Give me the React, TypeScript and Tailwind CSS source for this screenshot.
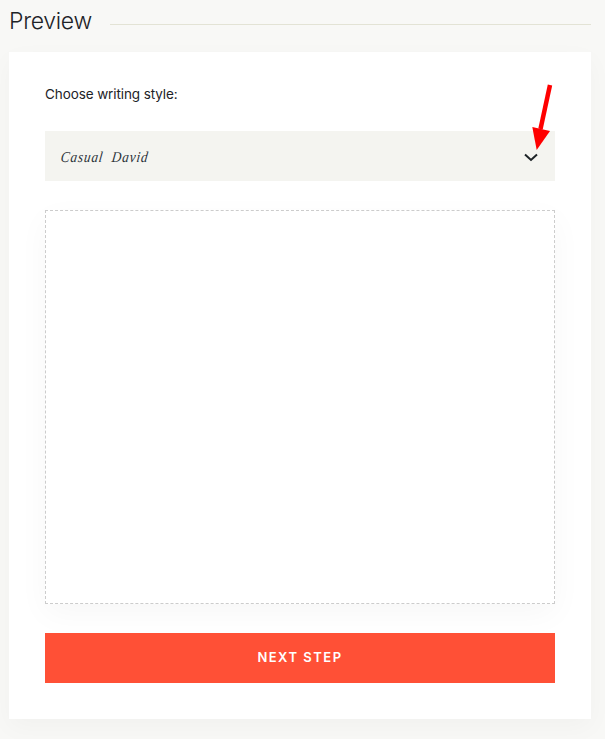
export default function App() {
  return (
    <div className="relative min-h-[739px] overflow-hidden bg-[#f8f8f6] px-[9px] pr-[14px] font-['Inter',sans-serif]">
      {/* Heading */}
      <div className="flex h-[52px] items-center gap-[18px] pb-[10px]">
        <h2 className="text-[23px] leading-none font-light tracking-[-0.3px] text-[#1d2327]">Preview</h2>
        <div className="mt-[6px] h-px flex-1 bg-[#e3e3d5]" />
      </div>

      {/* Card */}
      <div className="flex h-[667px] flex-col bg-white px-[36px] pt-[33px] shadow-[0_8px_24px_rgba(0,0,0,0.03)]">
        <label className="h-[18px] text-[13.5px] leading-[18px] tracking-[-0.1px] text-[#1d2327]">Choose writing style:</label>

        <div className="mt-[28px] flex h-[50px] items-center justify-between bg-[#f4f4f0] pr-[17px] pl-[16px]">
          <span className="origin-left skew-x-[-8deg] scale-x-[0.88] pt-[3px] font-['Liberation_Serif',serif] text-[15px] tracking-[1px] text-[#2a3138] italic">
            Casual&nbsp; David
          </span>
          <svg width="14" height="9" viewBox="0 0 14 9" fill="none" className="mt-[3px]">
            <path d="M1 1.5 L7 7 L13 1.5" stroke="#1d2327" strokeWidth="2" />
          </svg>
        </div>

        <div className="mt-[29px] h-[394px] border border-dashed border-[#cccccc] bg-white shadow-[0_10px_30px_rgba(0,0,0,0.035)]" />

        <button className="mt-[29px] h-[50px] bg-[#ff5036] text-[13px] font-semibold tracking-[1.5px] text-white">
          NEXT STEP
        </button>
      </div>

      {/* Red annotation arrow */}
      <svg width="30" height="70" viewBox="0 0 30 70" className="absolute top-[83px] left-[526px]">
        <path d="M24 2 L14.5 46" stroke="#ff0000" strokeWidth="4.5" />
        <path d="M6.3 44 L24 48 L10.7 67 Z" fill="#ff0000" />
      </svg>
    </div>
  );
}
